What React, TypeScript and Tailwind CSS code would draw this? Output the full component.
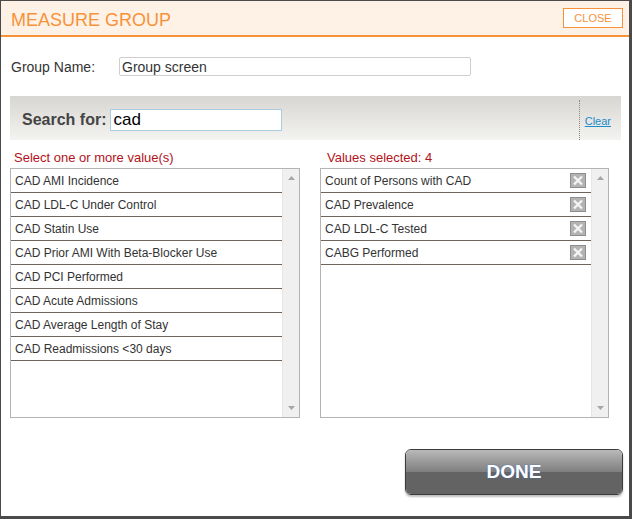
import React from 'react';

const available = [
  'CAD AMI Incidence',
  'CAD LDL-C Under Control',
  'CAD Statin Use',
  'CAD Prior AMI With Beta-Blocker Use',
  'CAD PCI Performed',
  'CAD Acute Admissions',
  'CAD Average Length of Stay',
  'CAD Readmissions <30 days',
];

const selected = [
  'Count of Persons with CAD',
  'CAD Prevalence',
  'CAD LDL-C Tested',
  'CABG Performed',
];

function Arrow({ up }: { up?: boolean }) {
  return (
    <svg width="7" height="4" viewBox="0 0 7 4" className="block">
      {up ? (
        <polygon points="0,4 7,4 3.5,0" fill="#a6a6a6" />
      ) : (
        <polygon points="0,0 7,0 3.5,4" fill="#a6a6a6" />
      )}
    </svg>
  );
}

function Scrollbar() {
  return (
    <div className="w-[17px] shrink-0 bg-[#f0f0f0] border-l border-[#e6e6e6] flex flex-col items-center justify-between pt-[7px] pb-[7px]">
      <Arrow up />
      <Arrow />
    </div>
  );
}

function RemoveIcon() {
  return (
    <svg width="16" height="15" viewBox="0 0 16 15" className="block">
      <rect x="0.5" y="0.5" width="15" height="14" fill="#b3b3b3" stroke="#8e8e8e" />
      <path d="M4 3.5 L12 11.5 M12 3.5 L4 11.5" stroke="#f4f4f4" strokeWidth="2.4" />
    </svg>
  );
}

export default function App() {
  return (
    <div
      className="w-[632px] h-[519px] bg-white border-t border-l border-r-[3px] border-b-[3px] border-[#4a4a4a] flex flex-col"
      style={{ fontFamily: '"Liberation Sans", Arial, sans-serif' }}
    >
      {/* header */}
      <div className="h-[36px] shrink-0 bg-[#fef2e7] border-b-2 border-[#f7923a] flex items-start justify-between">
        <div className="pl-[10px] pt-[9px] text-[18px] leading-[20px] text-[#f7923a]">MEASURE GROUP</div>
        <div className="mt-[7px] mr-[6px] w-[60px] h-[20px] bg-white border border-[#f7923a] flex items-center justify-center text-[11px] text-[#f7923a]">
          CLOSE
        </div>
      </div>

      {/* group name */}
      <div className="mt-[20px] flex items-center">
        <div className="pl-[10px] w-[118px] text-[14px] leading-[17px] pt-[1px] text-[#333]">Group Name:</div>
        <div className="w-[352px] h-[19px] border border-[#cfcfcf] rounded-[2px] flex items-center pl-[2px] pt-[1px] text-[14px] text-[#333]">
          Group screen
        </div>
      </div>

      {/* search bar */}
      <div className="mt-[20px] ml-[9px] w-[611px] h-[44px] bg-gradient-to-b from-[#d8d6d2] to-[#f3f3f1] flex items-stretch">
        <div className="flex-1 flex items-center pl-[12px] pt-[4px]">
          <span className="text-[16px] font-bold text-[#444]">Search for:</span>
          <div className="ml-[4px] w-[172px] h-[22px] bg-white border border-[#a8cde0] flex items-center pl-[2px] text-[17px] text-black">
            cad
          </div>
        </div>
        <div className="mt-[4px] border-l border-dotted border-[#888] flex items-center pl-[5px] pr-[10px] pt-[2px]">
          <span className="text-[11px] text-[#1c8ccb] underline">Clear</span>
        </div>
      </div>

      {/* labels */}
      <div className="mt-[11px] h-[14px] flex text-[13px] leading-[14px] text-[#b3121a]">
        <div className="pl-[13px] w-[326px]">Select one or more value(s)</div>
        <div>Values selected: 4</div>
      </div>

      {/* lists */}
      <div className="mt-[3px] ml-[9px] flex gap-[20px]">
        <div className="w-[290px] h-[250px] border border-[#b4b4b4] flex">
          <div className="flex-1">
            {available.map((v) => (
              <div
                key={v}
                className="h-[24px] border-b border-[#6f645b] flex items-center pl-[4px] pt-[1px] text-[12px] text-[#333]"
              >
                {v}
              </div>
            ))}
          </div>
          <Scrollbar />
        </div>
        <div className="w-[289px] h-[250px] border border-[#b4b4b4] flex">
          <div className="flex-1">
            {selected.map((v) => (
              <div
                key={v}
                className="h-[24px] border-b border-[#6f645b] flex items-center justify-between pl-[4px] pr-[5px] text-[12px] text-[#333]"
              >
                <span className="pt-[1px]">{v}</span>
                <RemoveIcon />
              </div>
            ))}
          </div>
          <Scrollbar />
        </div>
      </div>

      {/* done */}
      <div className="mt-[31px] flex justify-end pr-[6px]">
        <div className="w-[218px] h-[46px] rounded-[6px] border border-[#3c3c3c] overflow-hidden flex flex-col relative shadow-[0_2px_2px_rgba(0,0,0,0.25)]">
          <div className="h-[22px] bg-gradient-to-b from-[#b9b9b9] to-[#7f7f7f]" />
          <div className="flex-1 bg-[#636363]" />
          <div className="absolute inset-0 flex items-center justify-center text-[19px] font-bold text-white [text-shadow:0_0_2px_rgba(60,110,200,0.8)]">
            DONE
          </div>
        </div>
      </div>
    </div>
  );
}
